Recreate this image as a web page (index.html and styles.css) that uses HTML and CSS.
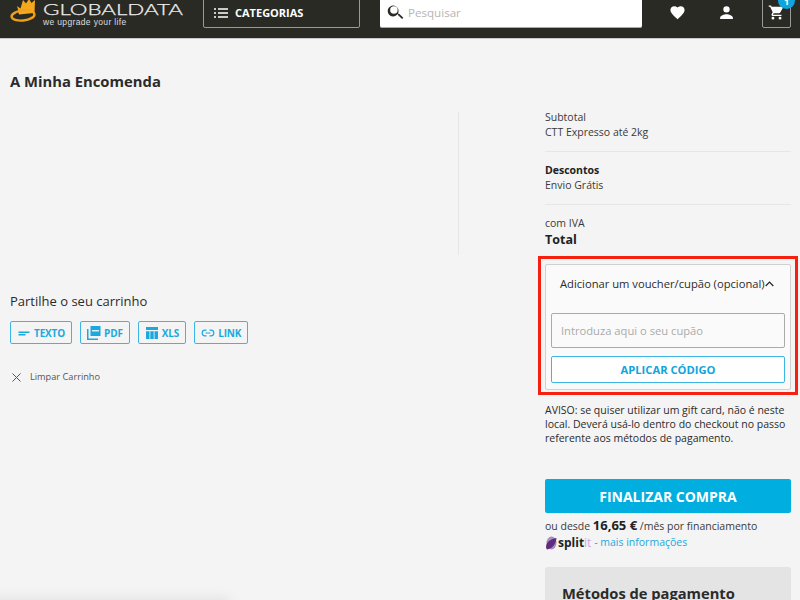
FILE: index.html
```html
<!DOCTYPE html>
<html lang="pt">
<head>
<meta charset="utf-8">
<title>A Minha Encomenda</title>
<link rel="stylesheet" href="styles.css">
</head>
<body>
<header class="topbar">
  <div class="logo">
    <svg class="crown" width="28" height="24" viewBox="0 0 28 24">
      <path d="M7 6 L10.500 8.500 L13 0 L16 3.500 L19 -1 L21.500 3 L25 0 L24.500 13 L9 13 Z" fill="#f5a81e"/>
      <ellipse cx="13" cy="15.500" rx="11.500" ry="5" fill="none" stroke="#eda01b" stroke-width="2.400" transform="rotate(-6 13 15.500)"/>
      <path d="M6 13 L21 11.500 L23 14 L9 17 Z" fill="#2a2a25"/>
      <path d="M8 11.500 L23 10 L23.500 13 L9 14.500 Z" fill="#f5a81e"/>
    </svg>
    <div class="logo-text">
      <svg class="logo-word" width="146" height="14" viewBox="0 0 146 14"><text x="0" y="13" textLength="140" lengthAdjust="spacingAndGlyphs">GLOBALDATA</text></svg>
      <span class="logo-tag">we upgrade your life</span>
    </div>
  </div>
  <button class="cat-btn">
    <svg width="14" height="10" viewBox="0 0 14 10"><path d="M0 1h2M4 1h10M0 5h2M4 5h10M0 9h2M4 9h10" stroke="#fff" stroke-width="1.300" fill="none"/></svg>
    <span>CATEGORIAS</span>
  </button>
  <div class="search">
    <svg width="20" height="20" viewBox="0 0 24 24"><path d="M15.500 14h-.8l-.3-.3A6.500 6.500 0 1 0 14 14.400l.3.3v.8l5 5 1.500-1.500-5-5zm-6 0a4.500 4.500 0 1 1 0-9 4.500 4.500 0 0 1 0 9z" fill="#2a2a25"/></svg>
    <span>Pesquisar</span>
  </div>
  <div class="top-icons">
    <svg class="heart" width="17" height="17" viewBox="0 0 24 24"><path d="M12 21.400l-1.500-1.300C5.400 15.400 2 12.300 2 8.500 2 5.400 4.400 3 7.500 3c1.700 0 3.400.8 4.500 2.100C13.100 3.800 14.800 3 16.500 3 19.600 3 22 5.400 22 8.500c0 3.800-3.400 6.900-8.500 11.600L12 21.400z" fill="#fff"/></svg>
    <svg class="user" width="17" height="17" viewBox="0 0 24 24"><path d="M12 12a4.500 4.500 0 1 0 0-9 4.500 4.500 0 0 0 0 9zm0 2.300c-3.300 0-9 1.700-9 5V21h18v-1.700c0-3.300-5.700-5-9-5z" fill="#fff"/></svg>
    <div class="cart">
      <svg width="17" height="17" viewBox="0 0 24 24"><path d="M7 18a2 2 0 1 0 0 4 2 2 0 0 0 0-4zM1 2v2h2l3.600 7.600L5.200 14c-.1.300-.2.600-.2 1 0 1.100.9 2 2 2h12v-2H7.400a.25.25 0 0 1-.25-.25l.03-.12.9-1.630h7.450c.75 0 1.410-.41 1.750-1.030l3.580-6.490A1 1 0 0 0 20 4H5.210l-.94-2H1zm16 16a2 2 0 1 0 0 4 2 2 0 0 0 0-4z" fill="#fff"/></svg>
      <span class="badge">1</span>
    </div>
  </div>
</header>

<main class="page">
  <section class="left">
    <h1>A Minha Encomenda</h1>
    <div class="items"></div>
    <h2>Partilhe o seu carrinho</h2>
    <div class="share">
      <a class="chip">
        <svg width="14" height="14" viewBox="0 0 14 14"><path d="M1.500 5.500h11v1.400h-11zM1.500 8h7v1.400h-7z" fill="#1ba8dd"/></svg>TEXTO
      </a>
      <a class="chip">
        <svg width="14" height="14" viewBox="0 0 14 14"><path d="M3.500 0h10v10h-10z" fill="#1ba8dd"/><path d="M0 3h1.500v9.500H11V14H0z" fill="#1ba8dd"/><path d="M5 4h7v1.500H5z" fill="#d5eef8"/></svg>PDF
      </a>
      <a class="chip">
        <svg width="14" height="14" viewBox="0 0 14 14"><path d="M1 1h12v3H1zM1 5.200h3.500V13H1zM5.300 5.200h3.400V13H5.300zM9.500 5.200H13V13H9.500z" fill="#1ba8dd"/></svg>XLS
      </a>
      <a class="chip">
        <svg width="14" height="14" viewBox="0 0 14 14"><path d="M5.500 4.200H4a2.800 2.800 0 0 0 0 5.600h1.500M8.500 4.200H10a2.800 2.800 0 0 1 0 5.600H8.500M4.500 7h5" stroke="#1ba8dd" stroke-width="1.200" fill="none"/></svg>LINK
      </a>
    </div>
    <a class="clear">
      <svg width="9" height="9" viewBox="0 0 9 9"><path d="M.5.500l8 8M8.500.500l-8 8" stroke="#555" stroke-width="1"/></svg>
      <span>Limpar Carrinho</span>
    </a>
  </section>

  <aside class="right">
    <div class="sum sum-first">
      <p>Subtotal</p>
      <p>CTT Expresso até 2kg</p>
    </div>
    <div class="sum">
      <p class="strong">Descontos</p>
      <p>Envio Grátis</p>
    </div>
    <div class="sum sum-last">
      <p>com IVA</p>
      <p class="total">Total</p>
    </div>
    <div class="voucher">
      <div class="voucher-head">
        <span>Adicionar um voucher/cupão (opcional)</span>
        <svg width="9" height="6" viewBox="0 0 9 6"><path d="M.7 5L4.500 1.200 8.300 5" stroke="#222" stroke-width="1.200" fill="none"/></svg>
      </div>
      <div class="voucher-input">Introduza aqui o seu cupão</div>
      <div class="voucher-btn">APLICAR CÓDIGO</div>
    </div>
    <p class="notice">AVISO: se quiser utilizar um gift card, não é neste local. Deverá usá-lo dentro do checkout no passo referente aos métodos de pagamento.</p>
    <div class="checkout">FINALIZAR COMPRA</div>
    <p class="finance">ou desde <b>16,65 €</b> /mês por financiamento</p>
    <p class="splitit">
      <svg width="12" height="14" viewBox="0 0 12 14"><ellipse cx="6.500" cy="7" rx="5" ry="6.500" fill="#a98bc0"/><path d="M11.500 2C11 8 7 13 2 13.500 -1 10 3 3 11.500 2z" fill="#5b2d7c"/></svg>
      <b>split</b><span class="it">it</span><span class="dash">&nbsp;- mais informações</span>
    </p>
    <div class="payments"><h3>Métodos de pagamento</h3></div>
  </aside>
</main>
<div class="bottom-shade"></div>
</body>
</html>
```
FILE: styles.css
```css
* { box-sizing: border-box; }
html, body { margin: 0; height: 600px; overflow: hidden; }
body { background: #f4f4f4; font-family: "Open Sans", sans-serif; color: #2b2b2b; position: relative; }
p, h1, h2, h3 { margin: 0; }

.topbar { height: 39px; background: #2a2a25; border-bottom: 1px solid #c8c8c8; display: flex; align-items: flex-start; padding-left: 10px; overflow: hidden; }
.logo { width: 193px; display: flex; gap: 5px; flex: none; }
.crown { flex: none; }
.logo-text { display: flex; flex-direction: column; margin-top: 2px; margin-right: -10px; }
.logo-word { display: block; flex: none; overflow: visible; }
.logo-word text { font-family: "Lato", sans-serif; font-weight: 300; font-size: 15px; fill: #eee; stroke: #eee; stroke-width: .25px; }
.logo-tag { font-family: "Liberation Sans", sans-serif; font-size: 8.500px; line-height: 10px; letter-spacing: .35px; color: #ddd; margin-top: 1px; }

.cat-btn { width: 157px; height: 31px; margin-top: -3px; background: transparent; border: 1px solid #999; border-radius: 2px; color: #fff; display: flex; align-items: center; gap: 7px; padding: 0 0 0 10px; font: 700 11px "Open Sans", sans-serif; flex: none; }
.search { width: 262px; height: 31px; margin: -3px 0 0 20px; background: #fff; border-bottom: 1px solid #aaa; border-radius: 2px; display: flex; align-items: center; gap: 2px; padding-left: 6px; font-size: 11.600px; color: #b5b5b5; flex: none; }
.top-icons { display: flex; align-items: flex-start; flex: none; padding-left: 27px; }
.heart { margin: 4px 0 0 0; }
.user { margin: 4px 0 0 32px; }
.cart { position: relative; width: 29px; height: 31px; margin: -3px 0 0 27px; border: 1px solid #999; border-radius: 2px; display: flex; align-items: center; justify-content: center; }
.badge { position: absolute; top: -6px; right: -5px; width: 17px; height: 17px; border-radius: 50%; background: #0ea5de; color: #fff; font-size: 9px; font-weight: 700; line-height: 20px; text-align: center; }

.page { display: flex; align-items: flex-start; }
.left { width: 459px; padding: 32px 0 0 10px; flex: none; }
h1 { font-size: 14.800px; line-height: 20px; font-weight: 700; color: #2b2b2b; }
.items { height: 143px; margin-top: 21px; border-right: 1px solid #e6e6e6; }
h2 { font-size: 13px; font-weight: 400; line-height: 18px; margin-top: 37px; }
.share { display: flex; gap: 8px; margin-top: 11px; }
.chip { height: 23px; display: flex; align-items: center; gap: 3px; padding: 0 6px; border: 1px solid #3cb6e4; border-radius: 2px; color: #1ba8dd; font-size: 10px; letter-spacing: -.15px; font-weight: 700; }
.clear { display: flex; align-items: center; gap: 9px; margin: 26px 0 0 2px; font-size: 9.200px; color: #555; line-height: 14px; }

.right { width: 246px; margin-left: 86px; padding-top: 71px; flex: none; font-size: 10.500px; line-height: 15px; color: #3a3a3a; }
.sum { padding: 11px 0 11px; border-bottom: 1px solid #e6e6e6; }
.sum-first { padding-top: 0; }
.sum-last { border-bottom: 0; padding-bottom: 15px; }
.strong { font-weight: 700; color: #222; }
.total { font-size: 12.500px; font-weight: 700; color: #222; line-height: 18px; margin-top: 0; }

.voucher { position: relative; height: 126px; background: #fafafa; border: 1px solid #d0d0d0; border-radius: 2px; padding: 0 5px; }
.voucher::after { content: ""; position: absolute; inset: -9px -8px -6px -8px; border: 3px solid #f5200f; pointer-events: none; }
.voucher-head { display: flex; align-items: center; height: 37px; padding-left: 9px; font-size: 11.200px; color: #2b2b2b; white-space: nowrap; }
.voucher-input { height: 35px; margin-top: 11px; background: #fafafa; border: 1px solid #aaa; border-radius: 2px; padding-left: 9px; display: flex; align-items: center; font-size: 11.200px; color: #aaa; }
.voucher-btn { height: 27px; margin-top: 8px; background: #fff; border: 1px solid #3cb6e4; border-radius: 2px; color: #0ea5de; font-size: 11.200px; font-weight: 700; display: flex; align-items: center; justify-content: center; }

.notice { margin-top: 13px; line-height: 14px; color: #2b2b2b; }
.checkout { height: 34px; margin-top: 34px; background: #00aee0; border-radius: 2px; color: #fff; font-size: 14px; font-weight: 700; display: flex; align-items: center; justify-content: center; }
.finance { margin-top: 5px; }
.finance b { font-size: 13px; color: #222; }
.splitit { display: flex; align-items: center; margin-top: 1px; color: #1ba8dd; }
.splitit b { color: #222; font-size: 12px; margin-left: 1px; }
.it { color: #c9a9dc; font-size: 12px; }
.payments { height: 50px; margin-top: 17px; background: #e4e4e4; border-radius: 2px; padding: 16px 17px; }
h3 { font-size: 14.700px; font-weight: 700; color: #2b2b2b; line-height: 20px; }

.bottom-shade { position: absolute; left: -40px; top: 598px; width: 270px; height: 30px; background: rgba(0,0,0,.07); filter: blur(6px); }
```
